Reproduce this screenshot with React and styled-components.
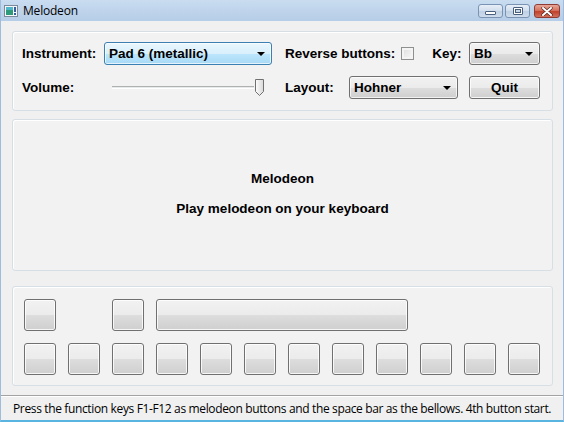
import React from "react";
import styled, { createGlobalStyle } from "styled-components";

const GlobalStyle = createGlobalStyle`
  html, body {
    margin: 0;
    padding: 0;
    background: #f0f0f0;
  }
  * {
    box-sizing: border-box;
  }
`;

const Window = styled.div`
  width: 564px;
  height: 422px;
  display: flex;
  flex-direction: column;
  background: #f0f0f0;
  border-left: 1px solid #9fbcdc;
  border-right: 1px solid #9fbcdc;
  border-bottom: 2px solid #58b4e0;
  font-family: "Liberation Sans", Arial, sans-serif;
  color: #000;
  overflow: hidden;
`;

const TitleBar = styled.div`
  height: 21px;
  flex: none;
  display: flex;
  align-items: center;
  padding: 0 3px 0 3px;
  background: linear-gradient(#c9dcf0, #b6cde7);
`;

const TitleText = styled.span`
  margin-left: 5px;
  font-family: "Open Sans", "Liberation Sans", sans-serif;
  font-size: 12px;
  letter-spacing: -0.2px;
  color: #000;
  flex: 1;
`;

const CaptionButtons = styled.div`
  display: flex;
  gap: 2px;
  align-self: flex-start;
  margin-top: 4px;
`;

const CaptionButton = styled.div`
  width: ${(p) => (p.$close ? 26 : 25)}px;
  height: 14px;
  border: 1px solid ${(p) => (p.$close ? "#8e3b34" : "#7a93b3")};
  border-radius: 3px;
  display: flex;
  align-items: center;
  justify-content: center;
  background: ${(p) =>
    p.$close
      ? "linear-gradient(#e7a799 0%, #d6735f 45%, #c0412b 55%, #d2705c 100%)"
      : "linear-gradient(#e7eef7 0%, #d4e0ee 45%, #bfd0e4 55%, #cfdcec 100%)"};
  margin-left: ${(p) => (p.$close ? 2 : 0)}px;
`;

const MinGlyph = styled.div`
  width: 11px;
  height: 4px;
  margin-top: 3px;
  border: 1px solid #4a5f7c;
  background: #fff;
  border-radius: 1px;
`;

const MaxGlyph = styled.div`
  width: 10px;
  height: 8px;
  border: 1px solid #4a5f7c;
  background: #fff;
  border-radius: 1px;
  display: flex;
  align-items: center;
  justify-content: center;

  &::after {
    content: "";
    width: 4px;
    height: 2px;
    border: 1px solid #4a5f7c;
    background: #c8d6e8;
  }
`;

const Client = styled.div`
  flex: 1;
  display: flex;
  flex-direction: column;
  padding: 10px 10px 0 11px;
`;

const Panel = styled.div`
  border: 1px solid #d6dfe6;
  border-radius: 3px;
  background: #f2f2f2;
  box-shadow: inset 1px 1px 0 #ffffff;
`;

const ControlsPanel = styled(Panel)`
  height: 80px;
  display: grid;
  grid-template-columns: 82px 168px 197px 71px;
  grid-template-rows: 23px 23px;
  row-gap: 11px;
  align-items: center;
  padding: 10px 0 0 9px;
`;

const MessagePanel = styled(Panel)`
  margin-top: 8px;
  height: 152px;
  display: flex;
  flex-direction: column;
  align-items: center;
  justify-content: center;
  gap: 15px;
  padding-bottom: 3px;
`;

const KeysPanel = styled(Panel)`
  margin-top: 15px;
  height: 100px;
  display: grid;
  grid-template-columns: repeat(12, 32px);
  grid-template-rows: 32px 32px;
  column-gap: 12px;
  row-gap: 12px;
  padding: 12px 0 0 11px;
`;

const Label = styled.span`
  font-size: 13.5px;
  font-weight: bold;
  white-space: nowrap;
  width: ${(p) => p.$width || "auto"};
`;

const Heading = styled.div`
  font-size: 13.5px;
  font-weight: bold;
`;

const RightGroup = styled.div`
  display: flex;
  align-items: center;
  padding-left: 13px;
  height: 100%;
`;

const Combo = styled.div`
  height: 23px;
  width: ${(p) => p.$width || "100%"};
  display: flex;
  align-items: center;
  padding: 0 6px 0 4px;
  border: 1px solid ${(p) => (p.$active ? "#3c7fb1" : "#707070")};
  border-radius: 3px;
  background: ${(p) =>
    p.$active
      ? "linear-gradient(#eaf6fd 0%, #d9f0fc 50%, #bee6fd 51%, #a7d9f5 100%)"
      : "linear-gradient(#f2f2f2 0%, #ebebeb 50%, #dddddd 51%, #cfcfcf 100%)"};
  box-shadow: inset 0 0 0 1px rgba(255, 255, 255, 0.7);
`;

const ComboText = styled.span`
  flex: 1;
  font-size: 13.5px;
  font-weight: bold;
  white-space: nowrap;
`;

const Arrow = styled.span`
  width: 0;
  height: 0;
  border-left: 4px solid transparent;
  border-right: 4px solid transparent;
  border-top: 4px solid #000;
  margin-top: 1px;
`;

const CheckBox = styled.span`
  width: 13px;
  height: 13px;
  margin-left: 6px;
  border: 1px solid #8e8f8f;
  background: linear-gradient(135deg, #dcdcdc, #fafafa);
  box-shadow: inset 0 0 0 2px #f4f4f4;
`;

const KeyLabel = styled(Label)`
  margin-left: 18px;
`;

const SliderWrap = styled.div`
  display: flex;
  align-items: center;
  height: 23px;
  padding-left: 8px;
`;

const SliderTrack = styled.div`
  width: 142px;
  height: 3px;
  border-top: 1px solid #b0b0b0;
  border-bottom: 1px solid #ffffff;
  background: #e7eaea;
`;

const PushButton = styled.div`
  width: ${(p) => p.$width || "100%"};
  height: ${(p) => p.$height || "100%"};
  display: flex;
  align-items: center;
  justify-content: center;
  border: 1px solid #707070;
  border-radius: 3px;
  background: linear-gradient(#f2f2f2 0%, #ebebeb 50%, #dddddd 51%, #cfcfcf 100%);
  box-shadow: inset 0 0 0 1px rgba(255, 255, 255, 0.8);
  font-size: 13.5px;
  font-weight: bold;
`;

const KeyButton = styled(PushButton)`
  grid-column: ${(p) => p.$col || "auto"};
  grid-row: ${(p) => p.$row || "auto"};
`;

const StatusBar = styled.div`
  height: 25px;
  flex: none;
  display: flex;
  align-items: center;
  padding: 1px 0 0 12px;
  margin-top: 9px;
  border-top: 1px solid #a3a3a3;
  box-shadow: inset 0 1px 0 #ffffff;
  font-family: "Open Sans", "Liberation Sans", sans-serif;
  font-size: 12px;
  letter-spacing: -0.36px;
  white-space: nowrap;
`;

const AppIcon = () => (
  <svg width="14" height="12" viewBox="0 0 14 12">
    <rect x="0.5" y="0.5" width="13" height="11" fill="#f4f6f8" stroke="#7b8a9a" />
    <rect x="2" y="2" width="7" height="8" fill="#2e9a7a" />
    <rect x="2" y="2" width="7" height="3" fill="#4fb7c9" />
    <rect x="10" y="2" width="2" height="5" fill="#3b5c9a" />
    <rect x="10" y="8" width="2" height="2" fill="#3b5c9a" />
  </svg>
);

const SliderThumb = () => (
  <svg width="11" height="19" viewBox="0 0 11 19">
    <defs>
      <linearGradient id="thumb" x1="0" x2="1" y1="0" y2="0">
        <stop offset="0" stopColor="#fdfdfd" />
        <stop offset="1" stopColor="#d8d8d8" />
      </linearGradient>
    </defs>
    <path d="M1.5 1.5 H9.5 V13.5 L5.5 17.5 L1.5 13.5 Z" fill="url(#thumb)" stroke="#707070" strokeLinejoin="round" />
  </svg>
);

export default function App() {
  const bottomRow = Array.from({ length: 12 }, (_, i) => i + 1);
  return (
    <>
      <GlobalStyle />
      <Window>
        <TitleBar>
          <AppIcon />
          <TitleText>Melodeon</TitleText>
          <CaptionButtons>
            <CaptionButton>
              <MinGlyph />
            </CaptionButton>
            <CaptionButton>
              <MaxGlyph />
            </CaptionButton>
            <CaptionButton $close>
              <svg width="12" height="9" viewBox="0 0 12 9">
                <path d="M2 1 L10 8 M10 1 L2 8" stroke="#4d1e18" strokeWidth="3.2" strokeLinecap="round" />
                <path d="M2 1 L10 8 M10 1 L2 8" stroke="#ffffff" strokeWidth="2" strokeLinecap="round" />
              </svg>
            </CaptionButton>
          </CaptionButtons>
        </TitleBar>
        <Client>
          <ControlsPanel>
            <Label>Instrument:</Label>
            <Combo $active>
              <ComboText>Pad 6 (metallic)</ComboText>
              <Arrow />
            </Combo>
            <RightGroup>
              <Label>Reverse buttons:</Label>
              <CheckBox />
              <KeyLabel>Key:</KeyLabel>
            </RightGroup>
            <Combo>
              <ComboText>Bb</ComboText>
              <Arrow />
            </Combo>

            <Label>Volume:</Label>
            <SliderWrap>
              <SliderTrack />
              <SliderThumb />
            </SliderWrap>
            <RightGroup>
              <Label $width="64px">Layout:</Label>
              <Combo $width="109px">
                <ComboText>Hohner</ComboText>
                <Arrow />
              </Combo>
            </RightGroup>
            <PushButton $height="23px">Quit</PushButton>
          </ControlsPanel>
          <MessagePanel>
            <Heading>Melodeon</Heading>
            <Heading>Play melodeon on your keyboard</Heading>
          </MessagePanel>
          <KeysPanel>
            <KeyButton $row="1" $col="1" />
            <KeyButton $row="1" $col="3" />
            <KeyButton $row="1" $col="4 / 10" />
            {bottomRow.map((n) => (
              <KeyButton key={n} $row="2" $col={String(n)} />
            ))}
          </KeysPanel>
        </Client>
        <StatusBar>
          Press the function keys F1-F12 as melodeon buttons and the space bar as the bellows. 4th button start.
        </StatusBar>
      </Window>
    </>
  );
}
